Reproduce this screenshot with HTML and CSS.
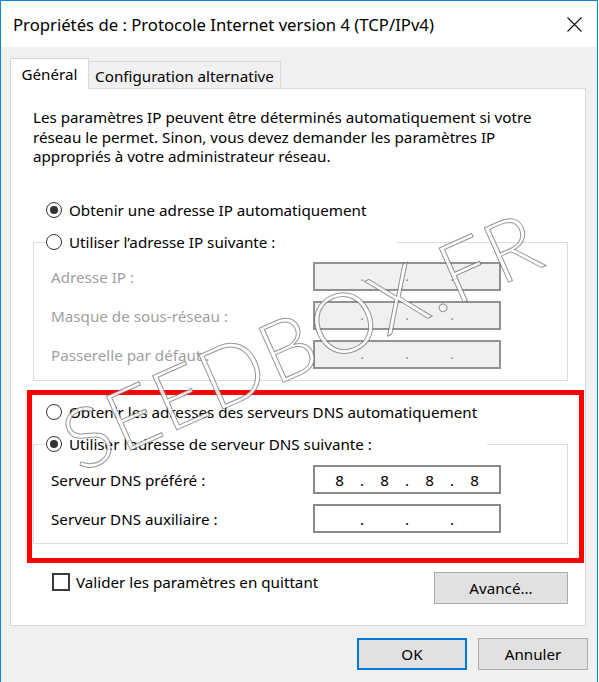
FILE: index.html
```html
<!DOCTYPE html>
<html lang="fr">
<head>
<meta charset="utf-8">
<title>Propriétés de : Protocole Internet version 4 (TCP/IPv4)</title>
<link rel="stylesheet" href="styles.css">
</head>
<body>
<div class="window">
  <div class="titlebar">
    <span class="title">Propriétés de : Protocole Internet version 4 (TCP/IPv4)</span>
    <span class="close">
      <svg width="15" height="15" viewBox="0 0 15 15"><path d="M0.5 0.5 L14.5 14.5 M14.5 0.5 L0.5 14.5" stroke="#111" stroke-width="1.1" fill="none"/></svg>
    </span>
  </div>
  <div class="client">
    <div class="tabs">
      <div class="tab active">Général</div>
      <div class="tab">Configuration alternative</div>
    </div>
    <div class="panel">
      <p class="intro">Les paramètres IP peuvent être déterminés automatiquement si votre<br>réseau le permet. Sinon, vous devez demander les paramètres IP<br>appropriés à votre administrateur réseau.</p>

      <div class="option first"><span class="radio on"></span><span>Obtenir une adresse IP automatiquement</span></div>

      <fieldset class="group">
        <legend class="option legend-ip"><span class="radio"></span><span>Utiliser l’adresse IP suivante :</span></legend>
        <div class="field">
          <span class="lbl disabled">Adresse IP :</span>
          <div class="ipbox off"><span class="seg"></span><span class="dot">.</span><span class="seg"></span><span class="dot">.</span><span class="seg"></span><span class="dot">.</span><span class="seg"></span></div>
        </div>
        <div class="field">
          <span class="lbl disabled">Masque de sous-réseau :</span>
          <div class="ipbox off"><span class="seg"></span><span class="dot">.</span><span class="seg"></span><span class="dot">.</span><span class="seg"></span><span class="dot">.</span><span class="seg"></span></div>
        </div>
        <div class="field">
          <span class="lbl disabled">Passerelle par défaut :</span>
          <div class="ipbox off"><span class="seg"></span><span class="dot">.</span><span class="seg"></span><span class="dot">.</span><span class="seg"></span><span class="dot">.</span><span class="seg"></span></div>
        </div>
      </fieldset>

      <div class="option dns-auto"><span class="radio"></span><span>Obtenir les adresses des serveurs DNS automatiquement</span></div>

      <fieldset class="group group-dns">
        <legend class="option legend-dns"><span class="radio on"></span><span>Utiliser l’adresse de serveur DNS suivante :</span></legend>
        <div class="field">
          <span class="lbl">Serveur DNS préféré :</span>
          <div class="ipbox"><span class="seg">8</span><span class="dot">.</span><span class="seg">8</span><span class="dot">.</span><span class="seg">8</span><span class="dot">.</span><span class="seg">8</span></div>
        </div>
        <div class="field">
          <span class="lbl">Serveur DNS auxiliaire :</span>
          <div class="ipbox"><span class="seg"></span><span class="dot">.</span><span class="seg"></span><span class="dot">.</span><span class="seg"></span><span class="dot">.</span><span class="seg"></span></div>
        </div>
      </fieldset>

      <div class="bottom-row">
        <div class="check-row"><span class="checkbox"></span><span>Valider les paramètres en quittant</span></div>
        <button class="btn adv">Avancé...</button>
      </div>

      <div class="highlight"></div>
    </div>
    <div class="actions">
      <button class="btn default">OK</button>
      <button class="btn">Annuler</button>
    </div>
  </div>
  <div class="watermark">SEEDBOX.FR</div>
</div>
</body>
</html>
```
FILE: styles.css
```css
html, body {
  margin: 0;
  padding: 0;
}
body {
  width: 599px;
  height: 682px;
  overflow: hidden;
  background: #ffffff;
  font-family: "Noto Sans", "Open Sans", sans-serif;
  font-size: 15.2px;
  color: #000;
}
.window {
  position: relative;
  width: 598px;
  height: 682px;
  box-sizing: border-box;
  border: 1px solid #1883d7;
  border-bottom: none;
  display: flex;
  flex-direction: column;
  overflow: hidden;
}
.titlebar {
  height: 46px;
  flex: 0 0 46px;
  background: #fff;
  display: flex;
  align-items: center;
  padding-left: 12px;
}
.title {
  font-size: 16.7px;
  color: #000;
}
.close {
  margin-left: auto;
  width: 46px;
  height: 46px;
  display: flex;
  align-items: center;
  justify-content: center;
}
.close svg { display: block; }
.client {
  flex: 1;
  background: #f0f0f0;
  padding: 11px 11px 0 9px;
}
.tabs {
  position: relative;
  z-index: 1;
  display: flex;
  align-items: flex-end;
  height: 31px;
  margin-bottom: -1px;
}
.tab {
  box-sizing: border-box;
  height: 27px;
  width: 192px;
  margin-bottom: 1px;
  background: #f0f0f0;
  border: 1px solid #d9d9d9;
  border-left: none;
  border-bottom: none;
  display: flex;
  align-items: center;
  justify-content: center;
  padding-top: 2px;
  white-space: nowrap;
}
.tab.active {
  height: 31px;
  width: 79px;
  margin-bottom: 0;
  background: #fff;
  border-left: 1px solid #d9d9d9;
  padding-top: 0;
}
.panel {
  position: relative;
  box-sizing: border-box;
  height: 538px;
  background: #fff;
  border: 1px solid #d9d9d9;
  padding: 19px 17px 0 22px;
}
.intro {
  margin: 0;
  line-height: 19.5px;
  white-space: nowrap;
}
.option {
  display: flex;
  align-items: center;
  height: 20px;
  gap: 7px;
  white-space: nowrap;
}
.option.first {
  margin-top: 33.5px;
  padding-left: 13px;
}
.option.dns-auto {
  margin-top: 21px;
  padding-left: 13px;
}
.radio {
  box-sizing: border-box;
  width: 16px;
  height: 16px;
  flex: 0 0 16px;
  border: 1px solid #333;
  border-radius: 50%;
  background: #fff;
  display: flex;
  align-items: center;
  justify-content: center;
}
.radio.on::after {
  content: "";
  width: 8px;
  height: 8px;
  border-radius: 50%;
  background: #333;
}
.group {
  margin: 12px 0 0 0;
  padding: 10px 0 11px 11px;
  border: 1px solid #dcdcdc;
  min-width: 0;
}
.group-dns {
  padding-top: 11px;
  padding-bottom: 10px;
}
legend.option {
  padding: 0 0 0 1px;
  background: #fff;
  box-sizing: border-box;
}
.legend-ip { width: 352px; }
.legend-dns { width: 442px; }
.field {
  display: grid;
  grid-template-columns: 268px 188px;
  align-items: center;
  height: 29px;
}
.field + .field {
  margin-top: 10px;
}
.lbl {
  padding-left: 6px;
  white-space: nowrap;
}
.lbl.disabled {
  color: #a0a0a0;
}
.ipbox {
  box-sizing: border-box;
  height: 29px;
  border: 2px solid #8a8a8a;
  background: #fff;
  display: flex;
  align-items: center;
  padding-left: 2px;
}
.ipbox.off {
  background: #f0f0f0;
  border-color: #929292;
}
.seg {
  width: 45px;
  text-align: center;
}
.dot {
  width: 0;
  display: flex;
  justify-content: center;
  overflow: visible;
}
.ipbox.off .dot {
  color: #7a7a9a;
  font-size: 12px;
}
.bottom-row {
  margin-top: 28px;
  display: flex;
  justify-content: space-between;
  align-items: flex-start;
}
.check-row {
  display: flex;
  align-items: center;
  gap: 6px;
  height: 19px;
  margin-left: 19px;
  white-space: nowrap;
}
.checkbox {
  box-sizing: border-box;
  width: 18px;
  height: 18px;
  border: 2px solid #3a3a3a;
  background: #fff;
}
.btn {
  box-sizing: border-box;
  height: 32px;
  width: 110px;
  border: 1px solid #adadad;
  background: #e1e1e1;
  font-family: "Noto Sans", "Open Sans", sans-serif;
  font-size: 15.2px;
  color: #000;
  padding: 0;
}
.btn.adv {
  width: 134px;
}
.btn.default {
  border: 2px solid #0078d7;
}
.actions {
  display: flex;
  justify-content: flex-end;
  gap: 11px;
  margin-top: 12px;
  margin-right: -2px;
}
.highlight {
  position: absolute;
  left: 16px;
  top: 301px;
  width: 557px;
  height: 173px;
  box-sizing: border-box;
  border: 5px solid #ff0000;
  pointer-events: none;
}
.watermark {
  position: absolute;
  left: 300px;
  top: 338px;
  transform: translate(-50%, -50%) rotate(-24deg);
  font-family: "Lato", "DejaVu Sans", sans-serif;
  font-weight: 300;
  font-size: 84px;
  letter-spacing: 2px;
  white-space: nowrap;
  color: rgba(255, 255, 255, 0.85);
  -webkit-text-stroke: 1px rgba(80, 80, 80, 0.6);
  pointer-events: none;
  z-index: 2;
}
```
